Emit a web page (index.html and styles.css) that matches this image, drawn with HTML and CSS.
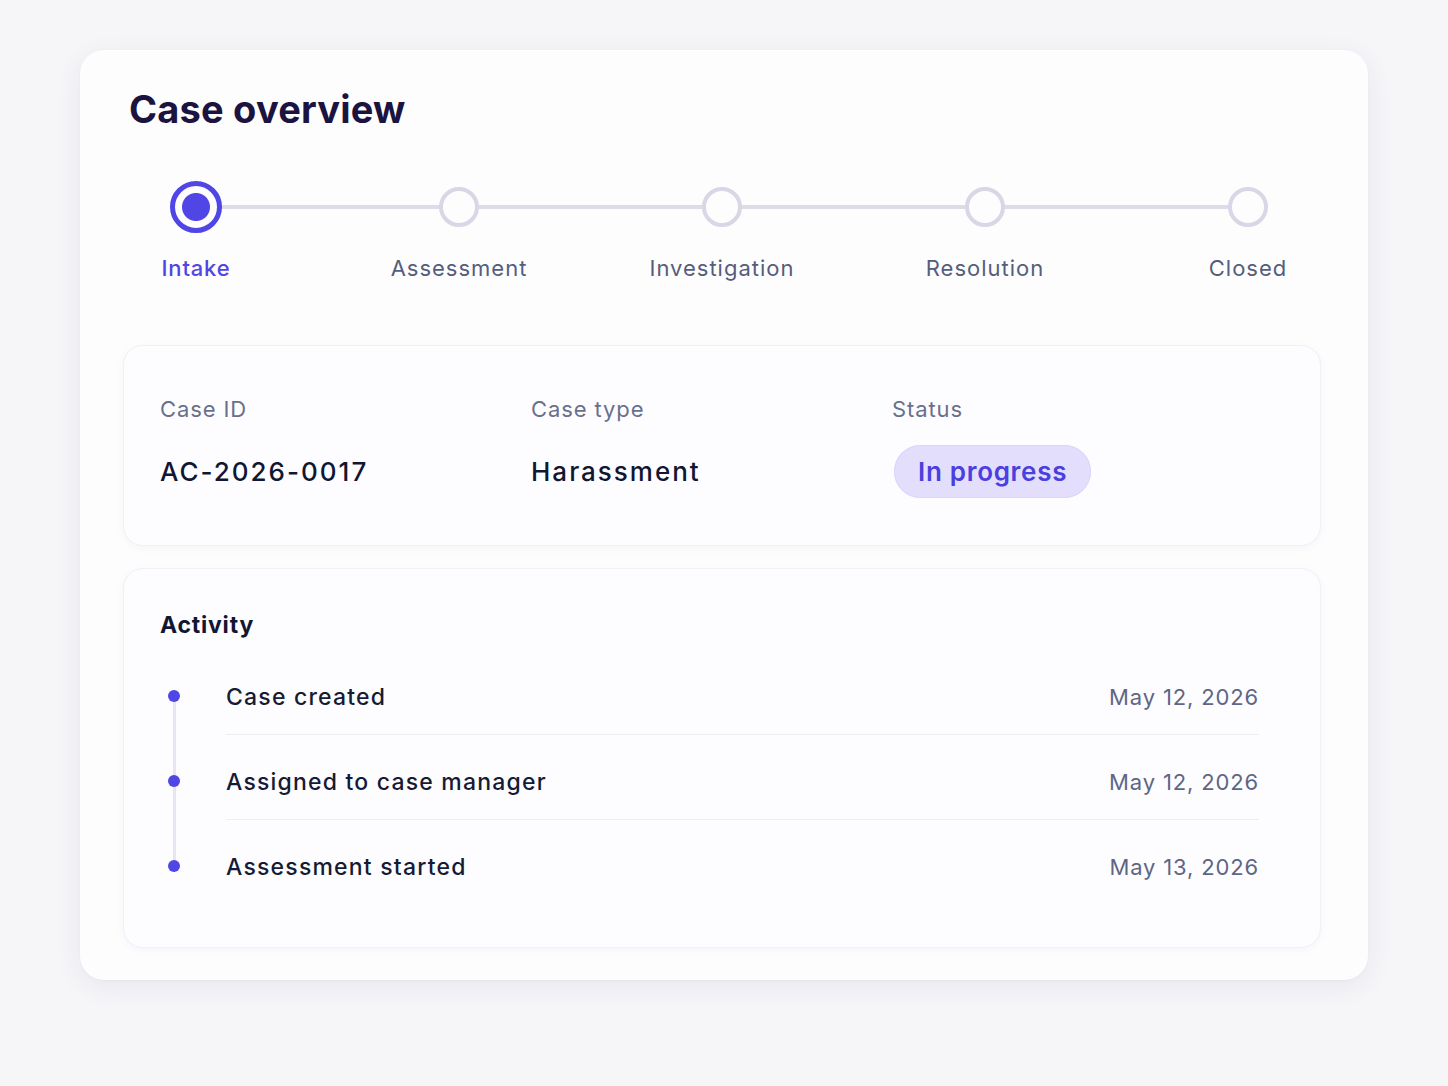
FILE: index.html
```html
<!DOCTYPE html>
<html lang="en">
<head>
  <meta charset="UTF-8">
  <title>Case overview</title>
  <link rel="stylesheet" href="styles.css">
</head>
<body>
<div class="case-card">
  <h1 class="case-title">Case overview</h1>

  <!--进度条-->
  <ol class="stepper">
    <li class="step current">
      <span class="step-dot"></span>
      <span class="step-name">Intake</span>
    </li>
    <li class="step">
      <span class="step-dot"></span>
      <span class="step-name">Assessment</span>
    </li>
    <li class="step">
      <span class="step-dot"></span>
      <span class="step-name">Investigation</span>
    </li>
    <li class="step">
      <span class="step-dot"></span>
      <span class="step-name">Resolution</span>
    </li>
    <li class="step">
      <span class="step-dot"></span>
      <span class="step-name">Closed</span>
    </li>
  </ol>

  <!--基本信息-->
  <div class="panel info">
    <div class="info-item">
      <div class="info-label">Case ID</div>
      <div class="info-value">AC-2026-0017</div>
    </div>
    <div class="info-item">
      <div class="info-label">Case type</div>
      <div class="info-value">Harassment</div>
    </div>
    <div class="info-item">
      <div class="info-label">Status</div>
      <div class="info-value"><span class="badge">In progress</span></div>
    </div>
  </div>

  <!--动态-->
  <div class="panel activity">
    <h2 class="activity-title">Activity</h2>
    <ul class="timeline">
      <li class="event">
        <div class="event-mark"><span class="event-dot"></span></div>
        <div class="event-body">
          <span class="event-name">Case created</span>
          <span class="event-date">May 12, 2026</span>
        </div>
      </li>
      <li class="event">
        <div class="event-mark"><span class="event-dot"></span></div>
        <div class="event-body">
          <span class="event-name">Assigned to case manager</span>
          <span class="event-date">May 12, 2026</span>
        </div>
      </li>
      <li class="event">
        <div class="event-mark"><span class="event-dot"></span></div>
        <div class="event-body">
          <span class="event-name">Assessment started</span>
          <span class="event-date">May 13, 2026</span>
        </div>
      </li>
    </ul>
  </div>
</div>
</body>
</html>
```

FILE: styles.css
```css
* {
  margin: 0;
  padding: 0;
  box-sizing: border-box;
}

body {
  background-color: #f6f6f9;
  font-family: Inter, "Noto Sans", sans-serif;
  color: #121733;
  padding: 50px 80px;
}

.case-card {
  width: 1288px;
  height: 930px;
  background-color: #fdfdfe;
  border-radius: 24px;
  box-shadow: 0 6px 28px rgba(40, 40, 90, 0.07), 0 1px 3px rgba(40, 40, 90, 0.04);
  padding: 36px 47px 32px 43px;
}

.case-title {
  font-size: 38px;
  line-height: 46px;
  font-weight: 700;
  color: #1b1340;
  margin-left: 6px;
  letter-spacing: 0.2px;
}

/*进度条*/
.stepper {
  list-style: none;
  display: flex;
  justify-content: space-between;
  position: relative;
  margin-top: 49px;
}

.stepper::before {
  content: "";
  position: absolute;
  left: 73px;
  right: 73px;
  top: 24px;
  height: 4px;
  background-color: #dddce9;
}

.step {
  width: 146px;
  display: flex;
  flex-direction: column;
  align-items: center;
  position: relative;
}

.step-dot {
  width: 40px;
  height: 40px;
  margin: 6px 0;
  border-radius: 50%;
  border: 4px solid #d8d7e6;
  background-color: #fdfdfe;
}

.step.current .step-dot {
  width: 52px;
  height: 52px;
  margin: 0;
  border: 5px solid #4f46e5;
  background: radial-gradient(circle, #4f46e5 0 13.5px, #fdfdfe 14.5px);
}

.step-name {
  margin-top: 21px;
  font-size: 22px;
  line-height: 28px;
  letter-spacing: 1px;
  color: #555d7c;
}

.step.current .step-name {
  color: #4f46e5;
  font-weight: 500;
  letter-spacing: 0.8px;
}

/*卡片*/
.panel {
  background-color: #fdfdff;
  border: 1px solid #f0f0f6;
  border-radius: 20px;
  box-shadow: 0 2px 10px rgba(40, 40, 90, 0.035);
}

.info {
  margin-top: 63px;
  height: 201px;
  padding: 50px 36px 0;
  display: grid;
  grid-template-columns: 371px 361px 1fr;
}

.info-label {
  font-size: 22px;
  line-height: 26px;
  letter-spacing: 0.9px;
  color: #69708c;
}

.info-value {
  margin-top: 23px;
  height: 53px;
  display: flex;
  align-items: center;
  font-size: 26px;
  font-weight: 500;
  letter-spacing: 2px;
  color: #111633;
}

.badge {
  display: inline-block;
  margin-left: 2px;
  height: 53px;
  line-height: 53px;
  padding: 0 24px;
  border-radius: 27px;
  background-color: #e3defc;
  box-shadow: inset 0 0 0 1px #dcd6fb;
  color: #4a3fe0;
  font-size: 26px;
  font-weight: 600;
  letter-spacing: 0.7px;
}

.activity {
  margin-top: 22px;
  height: 380px;
  padding: 42px 61px 0 36px;
}

.activity-title {
  font-size: 23px;
  line-height: 28px;
  font-weight: 700;
  letter-spacing: 0.8px;
  color: #111633;
}

/*时间线*/
.timeline {
  list-style: none;
  margin-top: 11px;
}

.event {
  display: flex;
}

.event-mark {
  width: 66px;
  flex-shrink: 0;
  position: relative;
}

.event-mark::before {
  content: "";
  position: absolute;
  left: 13px;
  width: 3px;
  top: 0;
  bottom: 0;
  background-color: #e6e5f0;
}

.event:first-child .event-mark::before {
  top: 46px;
}

.event:last-child .event-mark::before {
  bottom: auto;
  height: 46px;
}

.event-dot {
  position: absolute;
  left: 8px;
  top: 40px;
  width: 12px;
  height: 12px;
  border-radius: 50%;
  background-color: #4f46e5;
}

.event-body {
  flex: 1;
  display: flex;
  justify-content: space-between;
  padding: 32px 0 22px;
  line-height: 30px;
  border-bottom: 1px solid #ededf4;
}

.event:last-child .event-body {
  border-bottom: none;
}

.event-name {
  font-size: 23px;
  font-weight: 500;
  letter-spacing: 1.2px;
  color: #151a35;
}

.event-date {
  font-size: 22px;
  letter-spacing: 0.85px;
  color: #5f6685;
}
```
